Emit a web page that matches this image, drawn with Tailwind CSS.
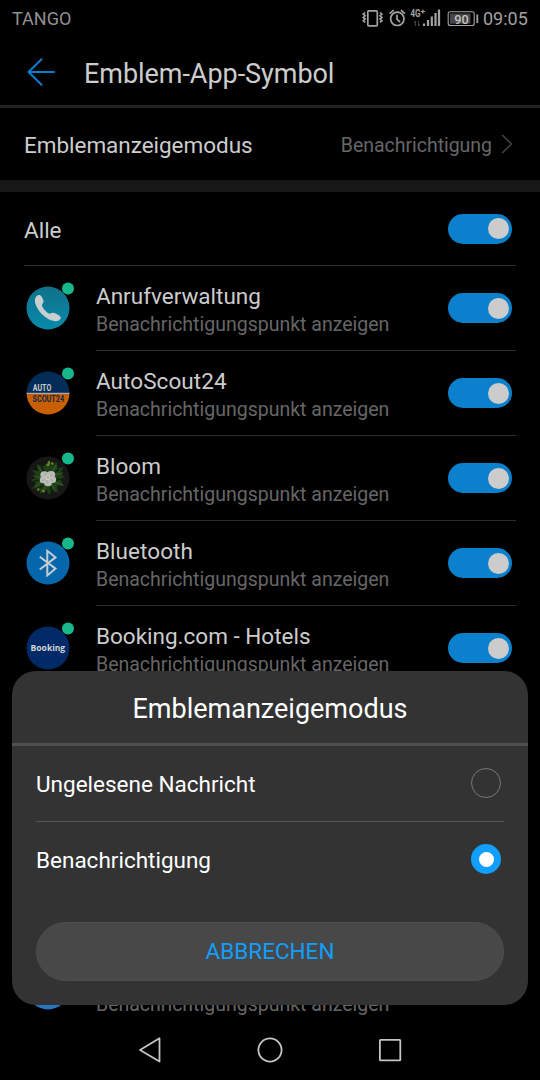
<!DOCTYPE html>
<html lang="de" class="bg-black">
<head>
  <meta charset="UTF-8">
  <meta name="viewport" content="width=device-width, initial-scale=1.0">
  <title>Emblem-App-Symbol</title>
  <script src="https://cdn.jsdelivr.net/npm/@tailwindcss/browser@4"></script>
</head>
<body class="bg-black font-['Roboto',sans-serif] text-[#cccccc]">
  <div class="relative w-[540px] h-[1080px] overflow-hidden flex flex-col">

    <!-- Status bar -->
    <div class="h-[38px] shrink-0 flex items-center pl-3 pr-3 text-[18px] text-[#919191]">
      <span class="-mt-0.5">TANGO</span>
      <svg class="ml-auto h-[38px] w-[120px]" viewBox="360 0 120 38" fill="none">
        <!-- vibrate -->
        <rect x="367.800" y="10.800" width="9.500" height="15" rx="1" stroke="#a3a3a3" stroke-width="1.700" />
        <path d="M365.200 12.500l-2 1.600 2 1.700-2 1.600 2 1.700-2 1.600 2 1.700M380 12.500l2 1.600-2 1.700 2 1.600-2 1.700 2 1.600-2 1.700" stroke="#a3a3a3" stroke-width="1.600" />
        <!-- alarm -->
        <circle cx="397.300" cy="18.800" r="6.700" stroke="#a3a3a3" stroke-width="1.700" />
        <path d="M397 14.800v4.300l3 3M389.700 13.600l4-3.400M404.900 13.600l-4-3.400" stroke="#a3a3a3" stroke-width="1.700" />
        <!-- network -->
        <text x="410.500" y="17" font-size="10.200" font-weight="700" textLength="10" lengthAdjust="spacingAndGlyphs" fill="#a3a3a3">4G</text>
        <path d="M420.900 11.500h4M422.900 9.500v4" stroke="#a3a3a3" stroke-width="1.200" />
        <path d="M415.500 21v5M414 22.600l1.500-1.600M418.500 21v5M420 24.400l-1.500 1.600" stroke="#3d3d3d" stroke-width="1.200" />
        <path d="M424 23.500v2.500M428 20v6M431.800 16.500v9.500M435.500 13v13M439 9.500v16.500" stroke="#a3a3a3" stroke-width="2.200" />
        <!-- battery -->
        <rect x="448.200" y="11.700" width="26" height="13.800" rx="2" stroke="#a3a3a3" stroke-width="1.100" />
        <rect x="450" y="13.500" width="20.500" height="10.200" fill="#464646" />
        <path d="M477.300 14.500v8.500" stroke="#a3a3a3" stroke-width="1.800" />
        <text x="461.400" y="23.500" font-size="13.500" font-weight="500" text-anchor="middle" textLength="14.500" lengthAdjust="spacingAndGlyphs" fill="#c4c4c4">90</text>
      </svg>
      <span class="-mt-0.5 ml-[3px] w-[45px] whitespace-nowrap text-[#a0a0a0]">09:05</span>
    </div>

    <!-- App bar -->
    <div class="h-[70px] shrink-0 flex items-center border-b-3 border-[#222222] pl-[27px]">
      <svg class="w-7 h-7 mt-px" viewBox="0 0 28 28" fill="none" stroke="#0a80cc" stroke-width="1.900" stroke-linecap="round" stroke-linejoin="round">
        <path d="M27 14H1.500M14.500 1.200L1.500 14l13 12.800" />
      </svg>
      <h1 class="ml-[29px] mt-1 text-[27px] leading-8 tracking-[-0.05px]">Emblem-App-Symbol</h1>
    </div>

    <!-- Badge mode -->
    <div class="h-[84px] shrink-0 flex items-center border-b-12 border-[#171717] pl-6 pr-[27px] pt-0.5">
      <span class="mt-0.5 text-[22.5px] tracking-[-0.03px]">Emblemanzeigemodus</span>
      <span class="ml-auto mt-0.5 text-[19.5px] tracking-[-0.03px] text-[#666666]">Benachrichtigung</span>
      <svg class="ml-[9px] -mt-0.5 w-3 h-5" viewBox="0 0 12 20" fill="none" stroke="#474747" stroke-width="1.400">
        <path d="M1.200 1l9.300 9-9.300 9" />
      </svg>
    </div>

    <!-- All apps -->
    <div class="h-[74px] shrink-0 mx-6 flex items-center justify-between border-b border-[#2b2b2b]">
      <span class="mt-1 text-[22.5px]">Alle</span>
      <span class="flex justify-end items-center w-[64px] h-[30px] mr-1 rounded-full bg-[#0b80cc] pr-[3px]"><span class="size-[21px] rounded-full bg-[#cccccc]"></span></span>
    </div>

    <!-- Anrufverwaltung -->
    <div class="h-[85px] shrink-0 pl-6 pr-6 flex">
      <svg class="w-[52px] h-[84px] shrink-0" viewBox="24 266 52 84">
        <defs>
          <linearGradient id="phone" x1="0" y1="0" x2="0" y2="1"><stop offset="0" stop-color="#10708a" /><stop offset="1" stop-color="#078bab" /></linearGradient>
        </defs>
        <circle cx="48" cy="308" r="21.500" fill="url(#phone)" />
        <path d="M36.200 296.400c1.200-1.300 3.600-2 4.700-.6 1.300 1.700 2.500 3.800 2.700 5.800.1 1.700-2 2.200-1.600 3.800.8 3 4 6.400 7 8.100 1.600.8 2.700-1.200 4.300-.7 2.300.7 5.200 1.900 7 3.600 1.200 1.200-.1 3.200-1.500 4-3.600 2-9.300-.2-13.500-3.400-4.900-3.700-9.200-9.600-10.200-14.600-.5-2.300-.1-4.600 1.100-6z" fill="#c9ced1" />
        <circle cx="68" cy="288.500" r="6" fill="#18b88d" />
      </svg>
      <div class="ml-5 flex-1 flex items-center justify-between border-b border-[#2b2b2b]">
        <div class="pt-[3px]">
          <div class="text-[22.5px] leading-[30px]">Anrufverwaltung</div>
          <div class="text-[19.5px] leading-[28px] text-[#666666]">Benachrichtigungspunkt anzeigen</div>
        </div>
        <span class="flex justify-end items-center w-[64px] h-[30px] mr-1 rounded-full bg-[#0b80cc] pr-[3px]"><span class="size-[21px] rounded-full bg-[#cccccc]"></span></span>
      </div>
    </div>

    <!-- AutoScout24 -->
    <div class="h-[85px] shrink-0 pl-6 pr-6 flex">
      <svg class="w-[52px] h-[84px] shrink-0" viewBox="24 266 52 84">
        <clipPath id="scout"><circle cx="48" cy="308" r="21.500" /></clipPath>
        <g clip-path="url(#scout)">
          <rect x="26" y="286" width="44" height="22" fill="#032c56" />
          <rect x="26" y="308.500" width="44" height="22" fill="#c95f03" />
          <rect x="26" y="307.800" width="44" height="1" fill="#c4c4c4" />
        </g>
        <text x="32.700" y="305.500" font-size="8.400" font-weight="700" textLength="18.600" lengthAdjust="spacingAndGlyphs" fill="#cccccc">AUTO</text>
        <text x="32.500" y="317.200" font-size="9" font-weight="700" textLength="31.600" lengthAdjust="spacingAndGlyphs" fill="#10294a">SCOUT24</text>
        <circle cx="68" cy="288.500" r="6" fill="#18b88d" />
      </svg>
      <div class="ml-5 flex-1 flex items-center justify-between border-b border-[#2b2b2b]">
        <div class="pt-[3px]">
          <div class="text-[22.5px] leading-[30px] tracking-[0.06px]">AutoScout24</div>
          <div class="text-[19.5px] leading-[28px] text-[#666666]">Benachrichtigungspunkt anzeigen</div>
        </div>
        <span class="flex justify-end items-center w-[64px] h-[30px] mr-1 rounded-full bg-[#0b80cc] pr-[3px]"><span class="size-[21px] rounded-full bg-[#cccccc]"></span></span>
      </div>
    </div>

    <!-- Bloom -->
    <div class="h-[85px] shrink-0 pl-6 pr-6 flex">
      <svg class="w-[52px] h-[84px] shrink-0" viewBox="24 266 52 84">
        <circle cx="48" cy="308" r="21.500" fill="#171717" />
        <g transform="translate(48 308)">
          <path d="M0-16l3 4 6-4 0 6 7-1-4 6 5 4-5 2 4 7-7-1 1 8-5-4-4 6-3-6-6 5 0-7-8 2 4-6-5-3 6-3-5-7 7 1-2-7 6 3z" fill="#1f3f18" />
          <path d="M-10-11l5 6M-14-2l7 2M-12 8l6-4M-4 14l2-7M7 13l-3-7M14 7l-8-3M14-5l-7 2M8-12l-4 6" stroke="#2f5420" stroke-width="1.600" stroke-linecap="round" />
          <path d="M-7-12l3 5M-14 3l6-1M3 14l0-5M12 1l-5 1M11-9l-4 3M-9 11l4-4" stroke="#102509" stroke-width="1.600" />
          <path d="M1-16v2M4-14.500h.5M-.5-13h.5M-10 11.500h.5M-5 13h.5" stroke="#5f8222" stroke-width="2.400" stroke-linecap="round" />
          <g fill="#b9bbb9">
            <ellipse cx="-3.500" cy="-3.200" rx="4.200" ry="3.500" />
            <ellipse cx="3" cy="-3.400" rx="4.200" ry="3.500" />
            <ellipse cx="4.600" cy="1.600" rx="3.500" ry="3.500" />
            <ellipse cx="0" cy="4.500" rx="4" ry="3.800" />
            <ellipse cx="-4.800" cy="2" rx="3.500" ry="3.200" />
          </g>
          <path d="M-3-5l2 4M4-4L2-1M5 3L2 1M-1 6V2M-6 3l3-2" stroke="#959b93" stroke-width=".6" />
          <circle cx="0" cy="-.3" r="2.300" fill="#cfd1cb" />
          <circle cx="0" cy="-.5" r="1" fill="#8fa357" />
        </g>
        <circle cx="68" cy="288.500" r="6" fill="#18b88d" />
      </svg>
      <div class="ml-5 flex-1 flex items-center justify-between border-b border-[#2b2b2b]">
        <div class="pt-[3px]">
          <div class="text-[22.5px] leading-[30px]">Bloom</div>
          <div class="text-[19.5px] leading-[28px] text-[#666666]">Benachrichtigungspunkt anzeigen</div>
        </div>
        <span class="flex justify-end items-center w-[64px] h-[30px] mr-1 rounded-full bg-[#0b80cc] pr-[3px]"><span class="size-[21px] rounded-full bg-[#cccccc]"></span></span>
      </div>
    </div>

    <!-- Bluetooth -->
    <div class="h-[85px] shrink-0 pl-6 pr-6 flex">
      <svg class="w-[52px] h-[84px] shrink-0" viewBox="24 266 52 84" fill="none">
        <circle cx="48" cy="308" r="21.500" fill="#0566ab" />
        <path d="M39.800 301.700l15.700 11.900-8.200 6.800v-24.600l8.200 6.600-15.700 12.100" stroke="#c6ccd1" stroke-width="2" />
        <circle cx="68" cy="288.500" r="6" fill="#18b88d" />
      </svg>
      <div class="ml-5 flex-1 flex items-center justify-between border-b border-[#2b2b2b]">
        <div class="pt-[3px]">
          <div class="text-[22.5px] leading-[30px] tracking-[0.06px]">Bluetooth</div>
          <div class="text-[19.5px] leading-[28px] text-[#666666]">Benachrichtigungspunkt anzeigen</div>
        </div>
        <span class="flex justify-end items-center w-[64px] h-[30px] mr-1 rounded-full bg-[#0b80cc] pr-[3px]"><span class="size-[21px] rounded-full bg-[#cccccc]"></span></span>
      </div>
    </div>

    <!-- Booking.com -->
    <div class="h-[85px] shrink-0 pl-6 pr-6 flex">
      <svg class="w-[52px] h-[84px] shrink-0" viewBox="24 266 52 84">
        <circle cx="48" cy="308" r="21.500" fill="#022a68" />
        <text x="30.600" y="311.300" font-size="9.400" font-weight="700" font-family="Open Sans" textLength="34.600" lengthAdjust="spacingAndGlyphs" fill="#d4d4d4">Booking</text>
        <circle cx="68" cy="288.500" r="6" fill="#18b88d" />
      </svg>
      <div class="ml-5 flex-1 flex items-center justify-between border-b border-[#2b2b2b]">
        <div class="pt-[3px]">
          <div class="text-[22.5px] leading-[30px]">Booking.com - Hotels</div>
          <div class="text-[19.5px] leading-[28px] text-[#666666]">Benachrichtigungspunkt anzeigen</div>
        </div>
        <span class="flex justify-end items-center w-[64px] h-[30px] mr-1 rounded-full bg-[#0b80cc] pr-[3px]"><span class="size-[21px] rounded-full bg-[#cccccc]"></span></span>
      </div>
    </div>

    <!-- Last row, mostly behind the dialog -->
    <div class="mt-[255px] h-[73px] shrink-0 pl-6 flex overflow-hidden">
      <svg class="w-[52px] h-[84px] shrink-0" viewBox="24 266 52 84">
        <circle cx="48" cy="308" r="21.500" fill="#2a74c2" />
      </svg>
      <div class="ml-5 pt-[45px] text-[19.5px] leading-[27px] text-[#666666]">Benachrichtigungspunkt anzeigen</div>
    </div>

    <!-- Dialog -->
    <div class="absolute left-3 top-[671px] w-[516px] h-[334px] rounded-[24px] bg-[#333333] text-white flex flex-col">
      <h2 class="h-[75px] border-b-3 border-[#505050] flex items-center justify-center pt-1 text-[27px]">Emblemanzeigemodus</h2>
      <div class="mx-6 h-[76px] flex items-center justify-between border-b border-[#555555]">
        <span class="pt-0.5 text-[22.5px]">Ungelesene Nachricht</span>
        <span class="size-[30px] mr-[3px] mb-px rounded-full border-[1.5px] border-[#777777]"></span>
      </div>
      <div class="mx-6 h-[76px] flex items-center justify-between">
        <span class="pt-0.5 text-[22.5px]">Benachrichtigung</span>
        <span class="size-[30px] mr-[3px] mb-0.5 rounded-full bg-[#119fff] flex items-center justify-center"><span class="size-[15px] rounded-full bg-white"></span></span>
      </div>
      <button class="mx-6 mt-[23.5px] h-[59px] rounded-full bg-[#484848] border border-[#4e4e4e] pt-px text-[22.5px] text-[#119fff]">ABBRECHEN</button>
    </div>

    <!-- Navigation bar -->
    <svg class="absolute left-0 top-[1020px] w-[540px] h-[60px]" viewBox="0 1020 540 60" fill="none" stroke="#c4c4c4" stroke-width="1.800" stroke-linejoin="round">
      <path d="M159.500 1038.300v23.200l-19.500-11.600z" />
      <circle cx="270" cy="1050" r="11.600" />
      <rect x="379.900" y="1039.900" width="20.400" height="20.400" rx=".6" />
    </svg>
  </div>
</body>
</html>
